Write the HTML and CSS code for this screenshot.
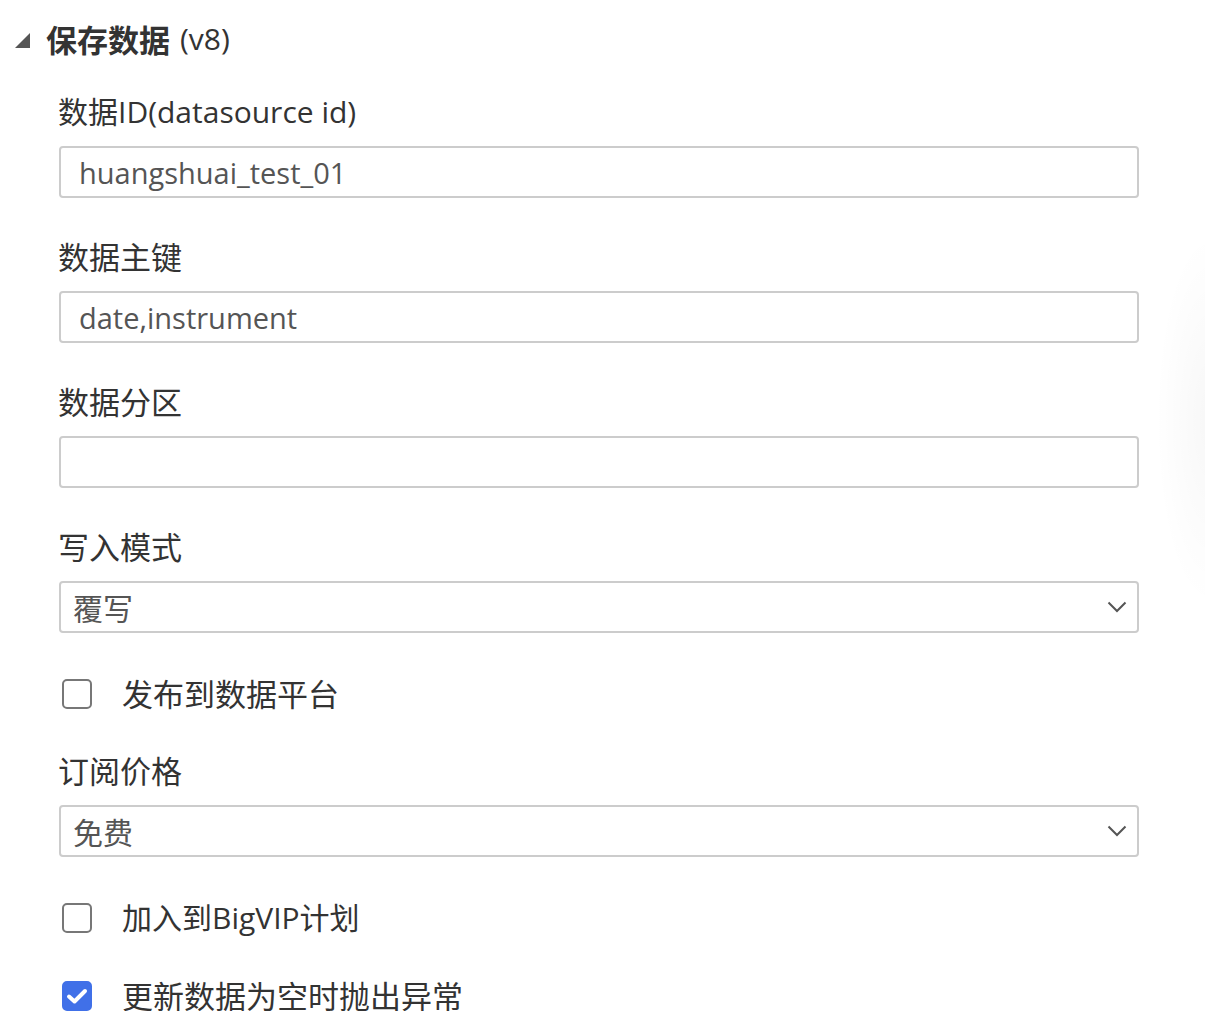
FILE: index.html
```html
<!DOCTYPE html>
<html lang="zh-CN">

<head>
    <meta charset="UTF-8">
    <meta name="viewport" content="width=device-width, initial-scale=1.0">
    <title>保存数据</title>
    <link rel="stylesheet" href="styles.css">
</head>

<body>
    <div class="panel">
        <div class="panel-title">
            <span class="caret"></span>
            <b>保存数据</b> <span class="ver">(v8)</span>
        </div>

        <div class="field first">
            <label class="label mixed">数据ID(datasource id)</label>
            <div class="input">huangshuai_test_01</div>
        </div>

        <div class="field">
            <label class="label">数据主键</label>
            <div class="input">date,instrument</div>
        </div>

        <div class="field">
            <label class="label">数据分区</label>
            <div class="input"></div>
        </div>

        <div class="field">
            <label class="label">写入模式</label>
            <div class="select">
                <span>覆写</span>
                <svg class="chevron" width="20" height="12" viewBox="0 0 20 12"><path d="M1.5 1.5 L10 10 L18.5 1.5" fill="none" stroke="#555" stroke-width="2"/></svg>
            </div>
        </div>

        <div class="check-row">
            <span class="box"></span>
            <span>发布到数据平台</span>
        </div>

        <div class="field">
            <label class="label">订阅价格</label>
            <div class="select">
                <span>免费</span>
                <svg class="chevron" width="20" height="12" viewBox="0 0 20 12"><path d="M1.5 1.5 L10 10 L18.5 1.5" fill="none" stroke="#555" stroke-width="2"/></svg>
            </div>
        </div>

        <div class="check-row">
            <span class="box"></span>
            <span class="mixed">加入到BigVIP计划</span>
        </div>

        <div class="check-row">
            <span class="box checked">
                <svg width="22" height="18" viewBox="0 0 22 18"><path d="M3 9.5 L8.5 14.5 L19 4" fill="none" stroke="#fff" stroke-width="4" stroke-linecap="round" stroke-linejoin="round"/></svg>
            </span>
            <span>更新数据为空时抛出异常</span>
        </div>
    </div>
    <div class="shade"></div>
</body>

</html>
```

FILE: styles.css
```css
body {
    margin: 0;
    background: #fff;
    font-family: "Open Sans", "Noto Sans CJK SC", sans-serif;
    color: #333;
    overflow: hidden;
}

.panel {
    padding: 16px 0 0 15px;
    width: 1124px;
}

.panel-title {
    display: flex;
    align-items: center;
    height: 44px;
    font-size: 31px;
    color: #333;
}

.panel-title b {
    font-weight: 700;
    margin-left: 16px;
}

.ver {
    margin-left: 10px;
    font-size: 30px;
}

.caret {
    width: 0;
    height: 0;
    margin-top: 4px;
    border-left: 15px solid transparent;
    border-bottom: 15px solid #555;
}

.field {
    margin-left: 44px;
    padding-top: 39px;
}

.field.first {
    padding-top: 32px;
}

.check-row + .field {
    padding-top: 42px;
}

.label {
    display: block;
    font-size: 31px;
    line-height: 40px;
    margin-bottom: 14px;
    margin-left: -1px;
}

.mixed {
    font-size: 30px;
}

.input,
.select {
    box-sizing: border-box;
    height: 52px;
    width: 1080px;
    border: 2px solid #ccc;
    border-radius: 4px;
    font-size: 29px;
    color: #555;
    display: flex;
    align-items: center;
    padding: 0 18px;
}

.select {
    justify-content: space-between;
    font-size: 30px;
    padding: 0 10px 0 12px;
}

.chevron {
    display: block;
}

.check-row {
    display: flex;
    align-items: center;
    margin-left: 47px;
    padding-top: 46px;
    font-size: 31px;
    line-height: 30px;
}

.check-row + .check-row {
    padding-top: 48px;
}

.box {
    box-sizing: border-box;
    width: 30px;
    height: 30px;
    border: 2px solid #777;
    border-radius: 5px;
    margin-right: 30px;
    display: flex;
    align-items: center;
    justify-content: center;
}

.box.checked {
    background: #4070e8;
    border-color: #4070e8;
}

.shade {
    position: absolute;
    right: -60px;
    top: 230px;
    width: 110px;
    height: 380px;
    border-radius: 50%;
    background: radial-gradient(ellipse at center, rgba(0, 0, 0, 0.03), rgba(0, 0, 0, 0) 70%);
}
```
